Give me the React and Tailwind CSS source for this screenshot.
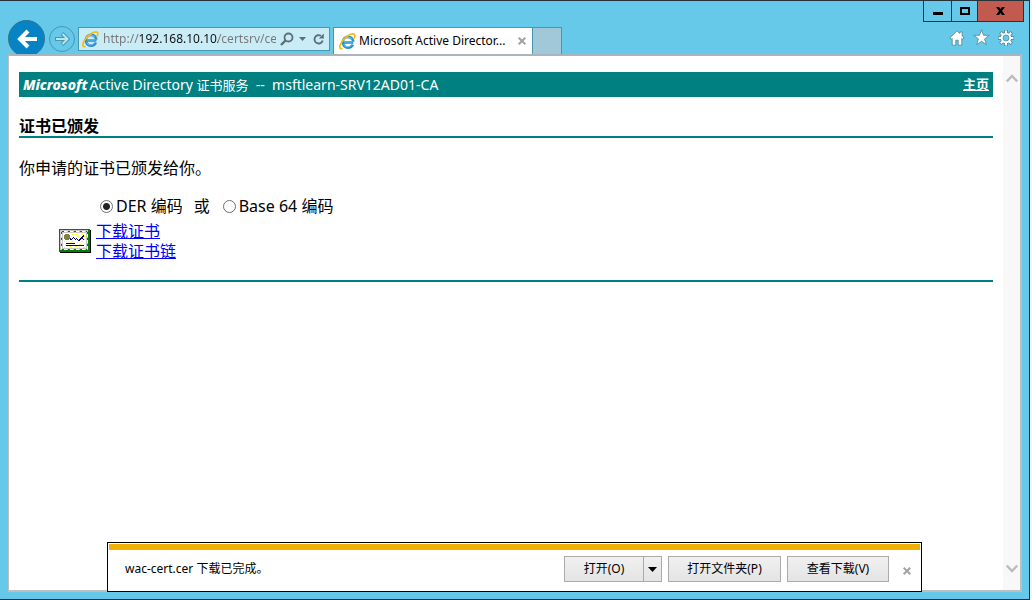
import React from "react";

function IELogo() {
  return (
    <svg className="size-[17px] shrink-0" viewBox="0 0 17 17" fill="none" aria-hidden="true">
      <path d="M14.400 9.300H4.600M13.900 11.600A5.400 5.400 0 1 1 14.400 8.600" stroke="#2b8fd0" strokeWidth="2.700" />
      <path d="M13.600 8.800H5M4.600 6.800A4.900 4.900 0 0 1 12.600 6" stroke="#62bdec" strokeWidth="1.200" />
      <path d="M12.600 11.800A4.900 4.900 0 0 1 4.500 11.600" stroke="#7cc8ef" strokeWidth="1" />
      <path d="M2.900 15.700C.2 16 .3 12.900 2.500 9.400 5.200 5 10.300.9 13.800.9c2.400 0 2.500 2 1.400 4.200" stroke="#f3bd16" strokeWidth="1.700" strokeLinecap="round" />
    </svg>
  );
}

function CertificateIcon() {
  return (
    <svg className="h-6 w-8 shrink-0" viewBox="0 0 32 24" shapeRendering="crispEdges" aria-hidden="true">
      <rect x="1" y="1" width="31" height="23" fill="#000" />
      <rect width="31" height="23" fill="#008000" />
      <rect x="1" y="1" width="28" height="20" fill="#c8c8c8" />
      <path d="M3 2h25M3 20h25M2 3v17M28 3v17" fill="none" stroke="#008000" strokeWidth="1" strokeDasharray="2 4" />
      <path d="M5 2h24M5 20h24M2 5v15M28 5v15" fill="none" stroke="#fff" strokeWidth="1" strokeDasharray="3 3" />
      <rect x="4" y="4" width="23" height="15" fill="#fff" />
      <path d="M13 5h2M17 5h1M22 5h2M12 7h1M18 7h2M24 7h2M13 12h2M18 13h1M22 12h2M25 10h1M5 12h1M11 13h2M25 14h1M6 15h1M20 15h2M10 17h2M16 17h2M20 18h1M24 18h2M5 18h1" transform="translate(0 .5)" stroke="#ffff00" strokeWidth="1" />
      <path d="M6 5h4v1h1v4h-1v1H6v-1H5V6h1z" fill="#808040" />
      <path d="M11 9h1v1h1v-1h1V8h1v1h1v1h1V9h1v1h1v1h1v-1h1V9h1V8h1V7h1V6h1v2h-1v2h1v1h-1v-1h-2v1h-1v1h-2v-1h-1v-1h-1v1h-1v-1h-1V9h-1v1h-1v1h-2v-1h-1z" fill="#000080" />
      <path d="M7 14h9v1H7zM7 16h18v1H7z" fill="#000080" />
    </svg>
  );
}

function CloseGlyph() {
  return (
    <svg className="size-2" viewBox="0 0 8 8" aria-hidden="true">
      <path d="M.7.7l6.600 6.600M7.300.7L.7 7.300" stroke="#a3a3a3" strokeWidth="2" />
    </svg>
  );
}

function WindowControls() {
  return (
    <div className="flex h-[19px] justify-end pr-[5px]">
      <div className="flex h-[21px] border-x border-b border-[#26323a]">
        <button aria-label="最小化" className="flex w-7 items-center justify-center border-r border-[#26323a]">
          <span className="mt-1 h-[3px] w-[10px] bg-black" />
        </button>
        <button aria-label="最大化" className="flex w-[26px] items-center justify-center border-r border-[#26323a]">
          <span className="h-2 w-[10px] border-2 border-black" />
        </button>
        <button aria-label="关闭" className="flex w-[45px] items-center justify-center bg-[#c35a50]">
          <svg className="h-2 w-[9px]" viewBox="0 0 9 8" aria-hidden="true">
            <path d="M0 0h3l1.500 2L6 0h3L6 4l3 4H6L4.500 6 3 8H0l3-4z" fill="#000" />
          </svg>
        </button>
      </div>
    </div>
  );
}

function AddressBar() {
  return (
    <div className="ml-[3px] mt-[7px] flex h-6 w-[252px] items-center border border-[#4797b0] bg-[#c9ecf7] pl-[3px]">
      <IELogo />
      <input
        aria-label="地址"
        defaultValue="http://192.168.10.10/certsrv/certfnsh.asp"
        className="ml-1 w-[173px] min-w-0 bg-[linear-gradient(90deg,#777_36px,#111_36px,#111_115px,#777_115px)] bg-clip-text text-xs text-transparent caret-black outline-none"
      />
      <button aria-label="搜索" className="ml-1">
        <svg className="size-[15px]" viewBox="0 0 15 15" fill="none" stroke="#5c6f77" aria-hidden="true">
          <circle cx="8.500" cy="5.500" r="4" strokeWidth="1.800" />
          <path d="M5.500 8.500L1 13" strokeWidth="2.400" />
        </svg>
      </button>
      <button aria-label="显示地址列表" className="ml-1">
        <svg className="h-1 w-[7px]" viewBox="0 0 7 4" aria-hidden="true">
          <path d="M0 0h7L3.500 4z" fill="#5c6f77" />
        </svg>
      </button>
      <button aria-label="刷新" className="ml-[7px]">
        <svg className="size-[13px]" viewBox="0 0 13 13" fill="none" aria-hidden="true">
          <path d="M8 2.800A4.200 4.200 0 1 0 9.700 7.500" stroke="#5c6f77" strokeWidth="1.900" />
          <path d="M10.800.6v5H5.800z" fill="#5c6f77" />
        </svg>
      </button>
    </div>
  );
}

function Toolbar() {
  return (
    <div className="flex h-[34px] items-start overflow-hidden pl-2 pr-[15px]">
      <button aria-label="后退" className="flex size-[37px] shrink-0 items-center justify-center rounded-full border border-[#35718c] bg-[#0583c5]">
        <svg className="size-[22px]" viewBox="0 0 22 22" fill="none" stroke="#fff" strokeWidth="4" aria-hidden="true">
          <path d="M21 11H4M12 3L4 11l8 8" />
        </svg>
      </button>
      <button aria-label="前进" className="ml-1 mt-[6px] flex size-[26px] shrink-0 items-center justify-center rounded-full border border-[#4797b0]">
        <svg className="size-4" viewBox="0 0 16 16" fill="none" aria-hidden="true">
          <path d="M1 8h12M8 2.500L13.500 8 8 13.500" stroke="#4797b0" strokeWidth="4" />
          <path d="M2 8h11M8.500 3l5 5-5 5" stroke="#b9e5f3" strokeWidth="2" />
        </svg>
      </button>
      <AddressBar />
      <div className="ml-[3px] mt-[7px] flex h-[27px] w-[200px] items-center border border-b-0 border-[#4797b0] bg-white pl-[5px] pr-[6px]">
        <IELogo />
        <span className="ml-[3px] flex-1 whitespace-nowrap text-xs text-black">Microsoft Active Director...</span>
        <button aria-label="关闭选项卡"><CloseGlyph /></button>
      </div>
      <button aria-label="新建选项卡" className="mt-[7px] h-[27px] w-[29px] border border-b-0 border-l-0 border-[#4797b0] bg-[#a1c8d8]" />
      <div className="ml-auto mt-[9px] flex items-center gap-2">
        <button aria-label="主页">
          <svg className="size-4" viewBox="0 0 16 16" aria-hidden="true">
            <path d="M8 .8L.8 8l1.500 1.200.9-.8v6.800h3.600v-5h2.400v5h3.600V8.400l.9.8L15.200 8l-2-2.100V2h-2.400v1.500z" fill="#fff" stroke="#4b8298" strokeWidth=".8" />
          </svg>
        </button>
        <button aria-label="收藏夹">
          <svg className="size-[17px]" viewBox="0 0 17 17" aria-hidden="true">
            <path d="M8.500.8l2 5.500h5.700l-4.600 3.600 1.700 5.800-4.800-3.400-4.800 3.400 1.700-5.800L.8 6.300h5.700z" fill="#fff" stroke="#4b8298" strokeWidth=".8" />
          </svg>
        </button>
        <button aria-label="工具">
          <svg className="size-4" viewBox="0 0 16 16" fill="none" aria-hidden="true">
            <path d="M8 0v16M0 8h16M2.300 2.300l11.400 11.400M13.700 2.300L2.300 13.700" stroke="#4b8298" strokeWidth="3.400" />
            <circle cx="8" cy="8" r="4.400" stroke="#4b8298" strokeWidth="3" />
            <path d="M8 .6v14.800M.6 8h14.800M2.800 2.800l10.400 10.400M13.200 2.800L2.800 13.200" stroke="#fff" strokeWidth="2" />
            <circle cx="8" cy="8" r="4.200" stroke="#fff" strokeWidth="2" />
            <circle cx="8" cy="8" r="3" fill="#67c9e9" stroke="#4b8298" strokeWidth=".7" />
          </svg>
        </button>
      </div>
    </div>
  );
}

function CertificatePage() {
  return (
    <main className="min-w-0 flex-1 px-[10px] pt-4 text-base text-black">
      <div className="flex h-[25px] items-center justify-between bg-[#008080] px-1 text-sm text-white">
        <p className="whitespace-pre">
          <b className="mr-[2px] font-extrabold italic">Microsoft</b>
          {"Active Directory "}
          <span className="text-[13px]">证书服务</span>
          {"  --  msftlearn-SRV12AD01-CA"}
        </p>
        <a href="#home" className="text-[13px] font-bold underline">主页</a>
      </div>
      <h1 className="mt-[18px] h-[23px] border-b-2 border-[#008080] font-bold leading-[22px]">证书已颁发</h1>
      <p className="mt-[18px] leading-6">你申请的证书已颁发给你。</p>
      <form className="mt-[14px] flex h-6 items-center whitespace-nowrap pl-[81px]">
        <label className="flex items-center gap-[3px]">
          <input type="radio" name="encoding" defaultChecked className="size-[13px] appearance-none rounded-full border border-[#707070] bg-[radial-gradient(circle,#222_3px,#fff_4px)]" />
          DER 编码
        </label>
        <span className="ml-[11px] mr-[13px]">或</span>
        <label className="flex items-center gap-[3px]">
          <input type="radio" name="encoding" className="size-[13px] appearance-none rounded-full border border-[#707070] bg-white" />
          Base 64 编码
        </label>
      </form>
      <div className="mt-[3px] flex items-center gap-[5px] border-b-2 border-[#008080] pb-[19px] pl-10">
        <CertificateIcon />
        <div className="flex flex-col items-start leading-5 text-[#0000ff] underline">
          <a href="#certificate">下载证书</a>
          <a href="#chain">下载证书链</a>
        </div>
      </div>
    </main>
  );
}

function Scrollbar() {
  return (
    <div className="flex w-[17px] shrink-0 flex-col justify-between bg-[#f8f8f8] pb-[17px] pt-[18px]">
      <button aria-label="向上滚动" className="flex justify-center">
        <svg className="h-[9px] w-3" viewBox="0 0 12 9" fill="none" stroke="#bcbcbc" strokeWidth="2.400" aria-hidden="true">
          <path d="M.8 7.500L6 2l5.200 5.500" />
        </svg>
      </button>
      <button aria-label="向下滚动" className="flex justify-center">
        <svg className="h-[9px] w-3" viewBox="0 0 12 9" fill="none" stroke="#bcbcbc" strokeWidth="2.400" aria-hidden="true">
          <path d="M.8 1.500L6 7l5.200-5.500" />
        </svg>
      </button>
    </div>
  );
}

function DownloadBar() {
  const button = "h-[26px] border border-[#ababab] bg-linear-to-b from-[#f0f0f0] to-[#e4e4e4] whitespace-nowrap";
  return (
    <div role="status" className="absolute inset-x-[98px] -bottom-[2px] h-[50px] border border-black bg-white p-px text-xs text-black">
      <div className="h-[6px] bg-[#f2b100]" />
      <div className="flex h-[38px] items-center pl-4 pr-[9px]">
        <span className="flex-1 whitespace-nowrap">wac-cert.cer 下载已完成。</span>
        <button className={`${button} w-20`}>打开(O)</button>
        <button aria-label="更多打开选项" className={`${button} flex w-[18px] items-center justify-center border-l-0`}>
          <svg className="h-[5px] w-[9px]" viewBox="0 0 9 5" aria-hidden="true"><path d="M0 0h9L4.500 5z" fill="#000" /></svg>
        </button>
        <button className={`${button} ml-[6px] w-[113px]`}>打开文件夹(P)</button>
        <button className={`${button} ml-[6px] w-[102px]`}>查看下载(V)</button>
        <button aria-label="关闭通知" className="ml-[14px] mt-1"><CloseGlyph /></button>
      </div>
    </div>
  );
}

export default function App() {
  return (
    <div className="flex min-h-screen bg-[#f4f4f4] pr-[2px] font-['Noto_Sans','Noto_Sans_CJK_SC',sans-serif]">
      <div className="flex min-w-0 flex-1 flex-col border-y border-r border-[#26323a] bg-[#67c9e9]">
        <header>
          <WindowControls />
          <Toolbar />
        </header>
        <div className="relative mb-[7px] ml-2 mr-[7px] flex flex-1 border-2 border-l border-[#bcbfc2] border-t-[#a9b4bd] bg-white">
          <CertificatePage />
          <Scrollbar />
          <DownloadBar />
        </div>
      </div>
    </div>
  );
}
